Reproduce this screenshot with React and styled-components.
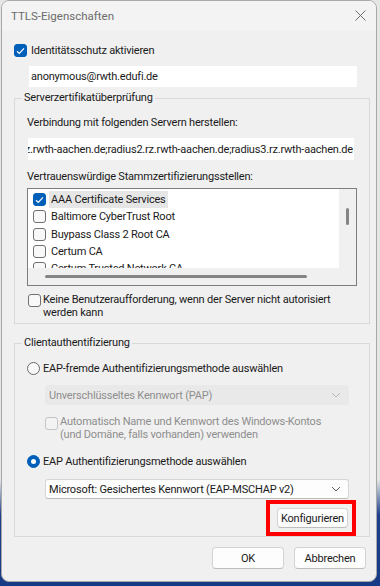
import React from 'react';
import styled, { createGlobalStyle } from 'styled-components';

const GlobalStyle = createGlobalStyle`
  html, body {
    margin: 0;
    padding: 0;
  }
  body {
    background: linear-gradient(180deg, #e4e7e4 0px, #e4e7e4 480px, #1d3f8e 515px, #173a86 586px);
    font-family: Roboto, "Liberation Sans", sans-serif;
    font-size: 11px;
    letter-spacing: -0.2px;
    color: #1a1a1a;
    min-height: 586px;
  }
`;

const Window = styled.div`
  width: 376px;
  height: 582px;
  margin-left: 1px;
  border: 1px solid #a8a8a8;
  border-radius: 8px;
  background: #f0f0f0;
  overflow: hidden;
  display: flex;
  flex-direction: column;
  box-sizing: border-box;
`;

const TitleBar = styled.div`
  height: 30px;
  flex-shrink: 0;
  background: #f3f3f3;
  display: flex;
  align-items: center;
  justify-content: space-between;
  padding: 0 9px 0 9px;
  color: #6c6c6c;
  font-size: 11.5px;
  letter-spacing: 0;
`;

const CloseBtn = styled.div`
  width: 14px;
  height: 14px;
  display: flex;
  align-items: center;
  justify-content: center;
  margin-top: -2px;
`;

const Content = styled.div`
  flex: 1;
  display: flex;
  flex-direction: column;
  padding: 12px 9px 0 10px;
`;

const Row = styled.div`
  display: flex;
  align-items: ${p => (p.$top ? 'flex-start' : 'center')};
  gap: ${p => p.$gap || 4}px;
  margin-top: ${p => p.$mt || 0}px;
  margin-left: ${p => p.$ml || 0}px;
  color: ${p => (p.$disabled ? '#8e8e8e' : '#1a1a1a')};
  line-height: ${p => (p.$top ? '13px' : '15px')};
  min-height: 15px;
  white-space: nowrap;
`;

const Box = styled.span`
  width: 13px;
  height: 13px;
  box-sizing: border-box;
  flex-shrink: 0;
  border-radius: 3px;
  display: inline-flex;
  align-items: center;
  justify-content: center;
  margin-top: ${p => p.$mt || 0}px;
  background: ${p => (p.$checked ? '#005fb8' : p.$disabled ? '#f3f3f3' : '#f8f8f8')};
  border: 1px solid ${p => (p.$checked ? '#005fb8' : p.$disabled ? '#c4c4c4' : '#707070')};
`;

const Radio = styled.span`
  width: 13px;
  height: 13px;
  box-sizing: border-box;
  flex-shrink: 0;
  border-radius: 50%;
  display: inline-flex;
  align-items: center;
  justify-content: center;
  background: ${p => (p.$checked ? '#005fb8' : '#f8f8f8')};
  border: 1px solid ${p => (p.$checked ? '#005fb8' : '#6a6a6a')};

  &::after {
    content: '';
    display: ${p => (p.$checked ? 'block' : 'none')};
    width: 5px;
    height: 5px;
    border-radius: 50%;
    background: #fff;
  }
`;

const TextInput = styled.div`
  width: ${p => p.$w}px;
  height: ${p => p.$h || 21}px;
  margin-top: ${p => p.$mt || 0}px;
  margin-left: ${p => p.$ml || 0}px;
  background: #fff;
  box-sizing: border-box;
  display: flex;
  align-items: center;
  justify-content: ${p => (p.$end ? 'flex-end' : 'flex-start')};
  padding: 0 ${p => (p.$end ? 1 : 0)}px 0 ${p => (p.$end ? 0 : 2)}px;
  overflow: hidden;
  white-space: nowrap;
`;

const Group = styled.fieldset`
  margin: ${p => p.$mt || 0}px 0 0 2px;
  padding: 0;
  border: 1px solid #d9d9d9;
  min-width: 0;
  width: 356px;
  box-sizing: border-box;
`;

const Legend = styled.legend`
  margin-left: 7px;
  padding: 0 2px;
  line-height: 14px;
  color: #1a1a1a;
`;

const GroupBody = styled.div`
  display: flex;
  flex-direction: column;
  padding: ${p => p.$pt || 0}px 13px ${p => p.$pb || 0}px 12px;
`;

const Label = styled.div`
  line-height: 14px;
  margin-top: ${p => p.$mt || 0}px;
  white-space: nowrap;
`;

const ListBox = styled.div`
  margin-top: 4px;
  width: 330px;
  height: 98px;
  box-sizing: border-box;
  border: 1px solid #7d7d7d;
  display: grid;
  grid-template-columns: 311px 1fr;
  grid-template-rows: 79px 1fr;
  background: #f0f0f0;
`;

const ListArea = styled.div`
  background: #fff;
  overflow: hidden;
  padding: 2px 0 0 5px;
`;

const ListItem = styled.div`
  height: 17.3px;
  display: flex;
  align-items: center;
  gap: 3px;
  white-space: nowrap;
`;

const ItemText = styled.span`
  padding: 1px 2px;
  line-height: 15px;
  background: ${p => (p.$selected ? '#e6e6e6' : 'transparent')};
`;

const VScroll = styled.div`
  display: flex;
  justify-content: center;
  padding-top: 19px;
`;

const VThumb = styled.div`
  width: 3px;
  height: 17px;
  border-radius: 2px;
  background: #858585;
  margin-left: -1px;
`;

const HScroll = styled.div`
  padding: 7px 0 0 17px;
`;

const HThumb = styled.div`
  width: 262px;
  height: 3px;
  border-radius: 2px;
  background: #858585;
`;

const Select = styled.div`
  width: 304px;
  height: 20px;
  box-sizing: border-box;
  margin-top: ${p => p.$mt || 0}px;
  margin-left: 18px;
  display: flex;
  align-items: center;
  justify-content: space-between;
  padding: 0 7px 0 3px;
  border-radius: 3px;
  background: ${p => (p.$disabled ? '#e9e9e9' : '#fdfdfd')};
  border: 1px solid ${p => (p.$disabled ? '#e9e9e9' : '#d6d6d6')};
  border-bottom-color: ${p => (p.$disabled ? '#e9e9e9' : '#bcbcbc')};
  color: ${p => (p.$disabled ? '#8e8e8e' : '#1a1a1a')};
  white-space: nowrap;
`;

const Highlight = styled.div`
  align-self: flex-end;
  margin-top: 1px;
  border: 4px solid #ff0000;
  padding: 4px 4px 4px 7px;
`;

const Button = styled.button`
  width: ${p => p.$w || 72}px;
  height: ${p => p.$h || 22}px;
  box-sizing: border-box;
  border: 1px solid #d3d3d3;
  border-bottom-color: #bdbdbd;
  border-radius: 4px;
  background: #fdfdfd;
  font-family: inherit;
  font-size: 11px;
  letter-spacing: -0.2px;
  color: #1a1a1a;
  padding: 0;
  display: flex;
  align-items: center;
  justify-content: center;
`;

const Footer = styled.div`
  display: flex;
  justify-content: flex-end;
  gap: 10px;
  margin-top: 10px;
  margin-right: 1px;
`;

const Check = () => (
  <svg width="9" height="8" viewBox="0 0 9 8">
    <polyline points="1,4.2 3.3,6.4 8,1.4" fill="none" stroke="#fff" strokeWidth="1.2" />
  </svg>
);

const Chevron = ({ color }) => (
  <svg width="10" height="6" viewBox="0 0 10 6">
    <polyline points="1,1 5,5 9,1" fill="none" stroke={color} strokeWidth="1" />
  </svg>
);

const certs = [
  'AAA Certificate Services',
  'Baltimore CyberTrust Root',
  'Buypass Class 2 Root CA',
  'Certum CA',
  'Certum Trusted Network CA',
];

export default function App() {
  return (
    <>
      <GlobalStyle />
      <Window>
        <TitleBar>
          <span>TTLS-Eigenschaften</span>
          <CloseBtn>
            <svg width="11" height="11" viewBox="0 0 11 11">
              <path d="M0.5 0.5 L10.5 10.5 M10.5 0.5 L0.5 10.5" stroke="#6e6e6e" strokeWidth="1" />
            </svg>
          </CloseBtn>
        </TitleBar>

        <Content>
          <Row $ml={2}>
            <Box $checked><Check /></Box>
            <span>Identitätsschutz aktivieren</span>
          </Row>
          <TextInput $w={328} $mt={8} $ml={17}>anonymous@rwth.edufi.de</TextInput>

          <Group $mt={4}>
            <Legend>Serverzertifikatüberprüfung</Legend>
            <GroupBody $pt={11} $pb={4}>
              <Label>Verbindung mit folgenden Servern herstellen:</Label>
              <TextInput $w={326} $h={22} $mt={8} $ml={1} $end>
                radius1.rz.rwth-aachen.de;radius2.rz.rwth-aachen.de;radius3.rz.rwth-aachen.de
              </TextInput>
              <Label $mt={10}>Vertrauenswürdige Stammzertifizierungsstellen:</Label>
              <ListBox>
                <ListArea>
                  {certs.map((c, i) => (
                    <ListItem key={c}>
                      <Box $checked={i === 0}>{i === 0 && <Check />}</Box>
                      <ItemText $selected={i === 0}>{c}</ItemText>
                    </ListItem>
                  ))}
                </ListArea>
                <VScroll><VThumb /></VScroll>
                <HScroll><HThumb /></HScroll>
                <div />
              </ListBox>
              <Row $top $mt={7} $ml={1} $gap={2}>
                <Box $mt={1} />
                <span>Keine Benutzeraufforderung, wenn der Server nicht autorisiert<br />werden kann</span>
              </Row>
            </GroupBody>
          </Group>

          <Group $mt={12}>
            <Legend>Clientauthentifizierung</Legend>
            <GroupBody $pt={11}>
              <Row $gap={3}>
                <Radio />
                <span>EAP-fremde Authentifizierungsmethode auswählen</span>
              </Row>
              <Select $disabled $mt={9}>
                <span>Unverschlüsseltes Kennwort (PAP)</span>
                <Chevron color="#b9b9b9" />
              </Select>
              <Row $top $disabled $mt={10} $ml={18} $gap={2}>
                <Box $disabled $mt={2} />
                <span>Automatisch Name und Kennwort des Windows-Kontos<br />(und Domäne, falls vorhanden) verwenden</span>
              </Row>
              <Row $gap={3} $mt={13}>
                <Radio $checked />
                <span>EAP Authentifizierungsmethode auswählen</span>
              </Row>
              <Select $mt={10}>
                <span>Microsoft: Gesichertes Kennwort (EAP-MSCHAP v2)</span>
                <Chevron color="#5a5a5a" />
              </Select>
              <Highlight>
                <Button $w={71} $h={20}>Konfigurieren</Button>
              </Highlight>
            </GroupBody>
          </Group>

          <Footer>
            <Button>OK</Button>
            <Button>Abbrechen</Button>
          </Footer>
        </Content>
      </Window>
    </>
  );
}
